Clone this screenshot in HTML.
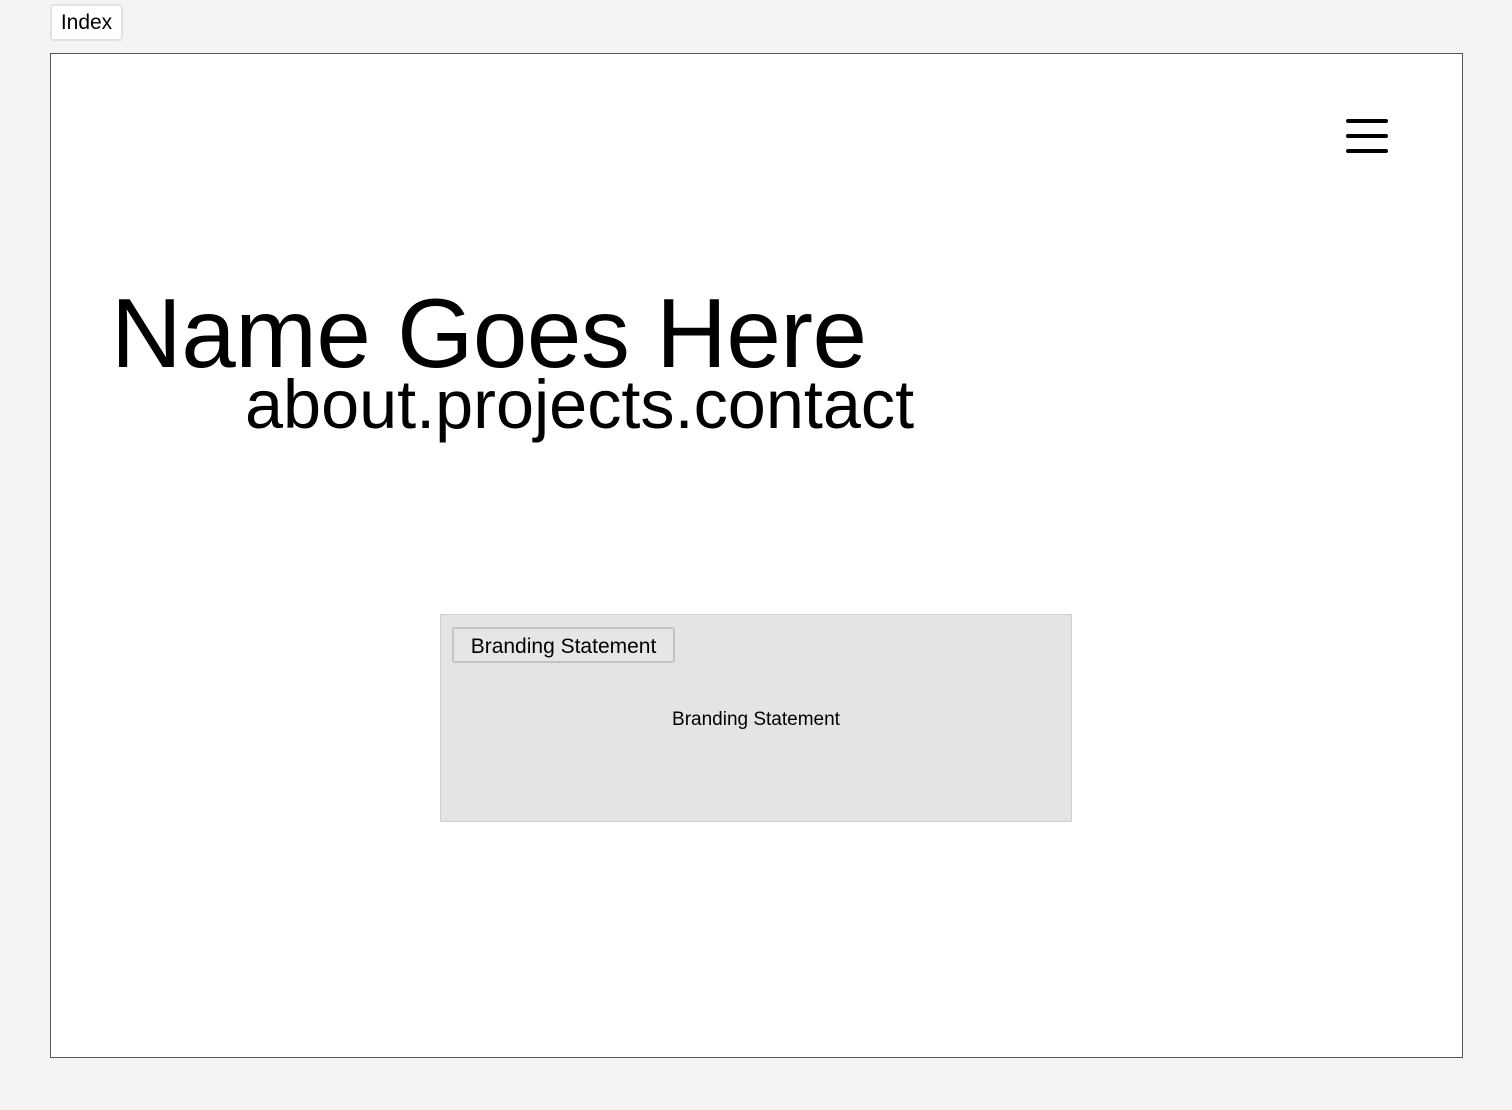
<!DOCTYPE html>
<html><head><meta charset="utf-8"><style>
*{box-sizing:border-box;margin:0;padding:0}
html,body{width:1512px;height:1110px;background:#f4f4f4;font-family:"Liberation Sans",sans-serif;color:#000;overflow:hidden;position:relative}
.idx{position:absolute;left:50px;top:4px;width:73px;height:37px;background:#fff;border:2px solid #e2e2e2;border-radius:4px;font-size:21px;line-height:33px;text-align:center}
.frame{position:absolute;left:50px;top:53px;width:1413px;height:1005px;background:#fff;border:1px solid #555}
.bar{position:absolute;left:1346px;width:42px;height:4px;background:#000;border-radius:2px}
.name{position:absolute;left:111px;top:278px;font-size:98px;line-height:110px;white-space:nowrap;letter-spacing:-0.5px}
.nav{position:absolute;left:245px;top:367px;font-size:68.4px;line-height:76px;white-space:nowrap}
.box{position:absolute;left:440px;top:614px;width:632px;height:208px;background:#e4e4e4;border:1px solid #d0d0d0}
.btn{position:absolute;left:452px;top:627px;width:223px;height:36px;border:2px solid #c4c4c4;border-radius:3px;background:#e6e6e6;font-size:21px;line-height:35px;text-align:center}
.txt{position:absolute;left:440px;width:632px;top:709px;text-align:center;font-size:19px}
</style></head><body>
<div class="idx">Index</div>
<div class="frame"></div>
<div class="bar" style="top:119px"></div>
<div class="bar" style="top:134px"></div>
<div class="bar" style="top:149px"></div>
<div class="name">Name Goes Here</div>
<div class="nav">about.projects.contact</div>
<div class="box"></div>
<div class="btn">Branding Statement</div>
<div class="txt">Branding Statement</div>
</body></html>
